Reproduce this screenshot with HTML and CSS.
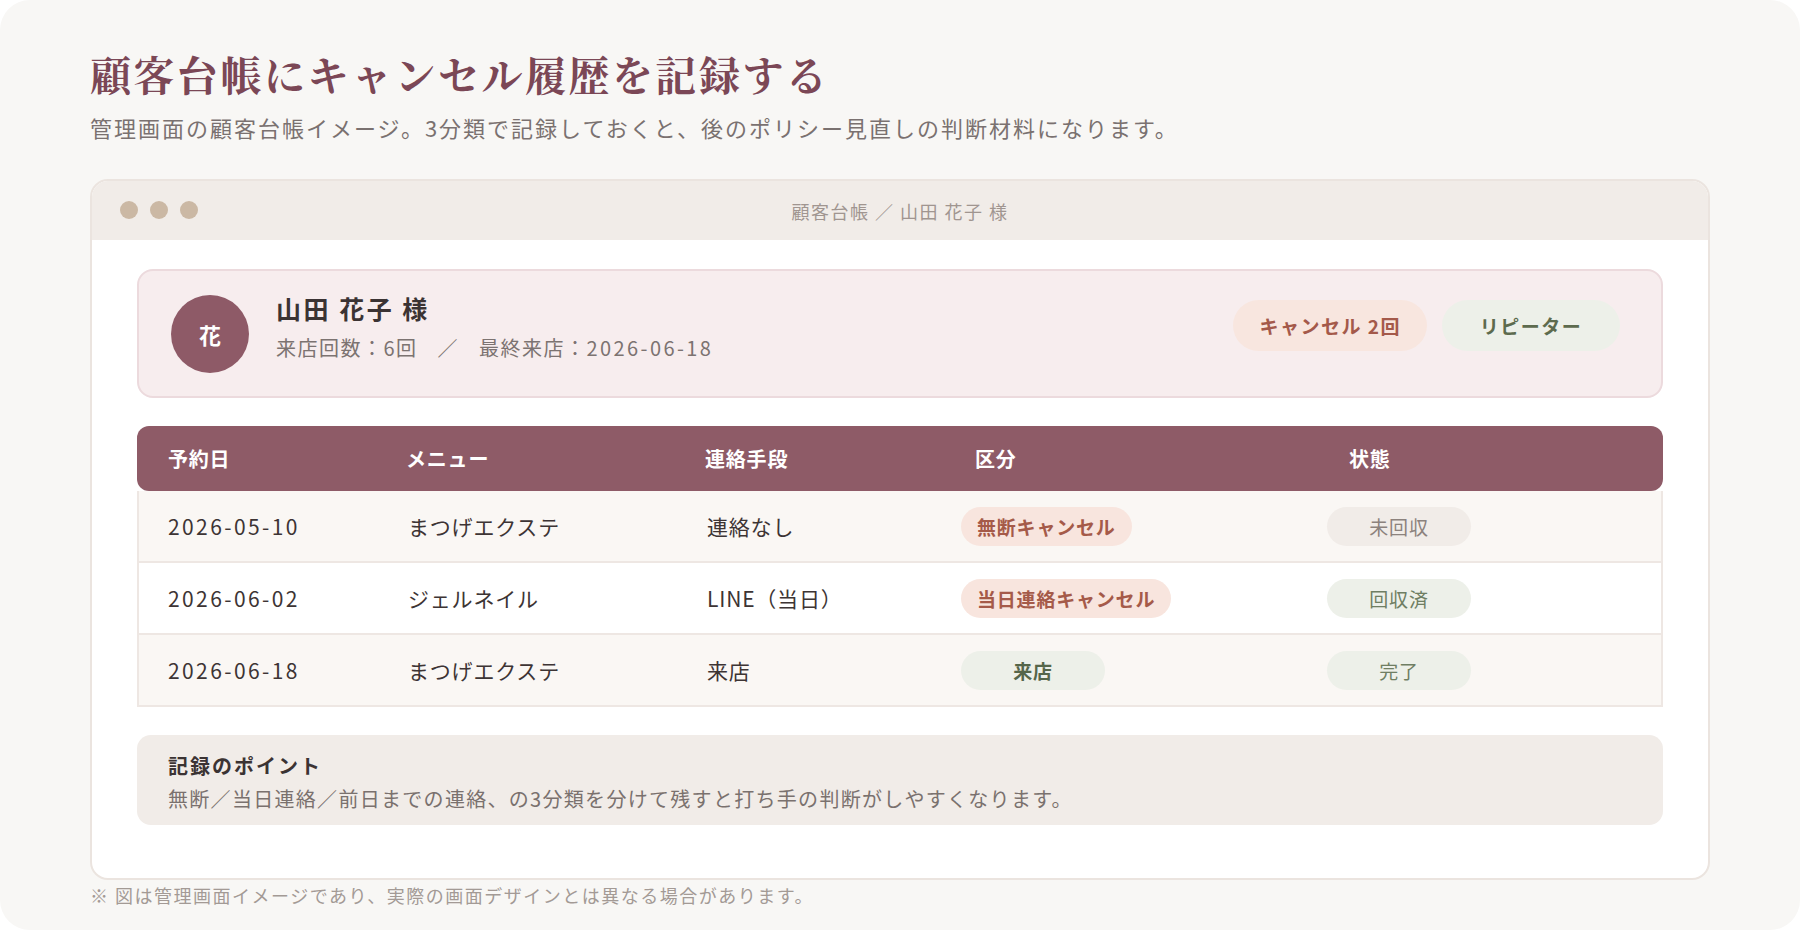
FILE: index.html
```html
<!DOCTYPE html>
<html lang="ja">
<head>
    <meta charset="UTF-8" />
    <meta name="viewport" content="width=device-width, initial-scale=1.0" />
    <title>顧客台帳にキャンセル履歴を記録する</title>
    <link rel="stylesheet" href="styles.css">
</head>
<body>
    <div class="page">
        <h1 class="title">顧客台帳にキャンセル履歴を記録する</h1>
        <p class="lead">管理画面の顧客台帳イメージ。3分類で記録しておくと、後のポリシー見直しの判断材料になります。</p>

        <div class="window">
            <div class="window-bar">
                <div class="dots">
                    <span class="dot"></span>
                    <span class="dot"></span>
                    <span class="dot"></span>
                </div>
                <div class="window-title">顧客台帳 ／ 山田 花子 様</div>
            </div>

            <div class="window-body">
                <div class="customer">
                    <div class="avatar">花</div>
                    <div class="customer-info">
                        <div class="customer-name">山田 花子 様</div>
                        <div class="customer-meta">来店回数：6回<span class="sep">／</span>最終来店：<span class="date">2026-06-18</span></div>
                    </div>
                    <div class="badges">
                        <span class="badge badge-cancel">キャンセル 2回</span>
                        <span class="badge badge-repeat">リピーター</span>
                    </div>
                </div>

                <div class="history">
                    <div class="history-head">
                        <div class="cell">予約日</div>
                        <div class="cell">メニュー</div>
                        <div class="cell">連絡手段</div>
                        <div class="cell">区分</div>
                        <div class="cell">状態</div>
                    </div>
                    <div class="history-row alt">
                        <div class="cell date">2026-05-10</div>
                        <div class="cell">まつげエクステ</div>
                        <div class="cell">連絡なし</div>
                        <div class="cell cell-tag"><span class="tag tag-cancel">無断キャンセル</span></div>
                        <div class="cell cell-state"><span class="state state-open">未回収</span></div>
                    </div>
                    <div class="history-row">
                        <div class="cell date">2026-06-02</div>
                        <div class="cell">ジェルネイル</div>
                        <div class="cell">LINE（当日）</div>
                        <div class="cell cell-tag"><span class="tag tag-cancel">当日連絡キャンセル</span></div>
                        <div class="cell cell-state"><span class="state state-done">回収済</span></div>
                    </div>
                    <div class="history-row alt">
                        <div class="cell date">2026-06-18</div>
                        <div class="cell">まつげエクステ</div>
                        <div class="cell">来店</div>
                        <div class="cell cell-tag"><span class="tag tag-visit">来店</span></div>
                        <div class="cell cell-state"><span class="state state-done">完了</span></div>
                    </div>
                </div>

                <div class="note">
                    <div class="note-title">記録のポイント</div>
                    <div class="note-text">無断／当日連絡／前日までの連絡、の3分類を分けて残すと打ち手の判断がしやすくなります。</div>
                </div>
            </div>
        </div>

        <p class="footnote">※ 図は管理画面イメージであり、実際の画面デザインとは異なる場合があります。</p>
    </div>
</body>
</html>
```

FILE: styles.css
```css
body {
    margin: 0;
    background: #fff;
    font-family: "Noto Sans CJK JP", "Noto Sans", sans-serif;
    letter-spacing: 0.05em;
    color: #3b3333;
}

.page {
    width: 1800px;
    height: 930px;
    box-sizing: border-box;
    padding: 50px 90px 0;
    background: #f8f7f5;
    border-radius: 30px;
}

.title {
    margin: 0;
    font-family: "Noto Serif CJK JP", "Noto Serif JP", serif;
    font-size: 41px;
    line-height: 48px;
    font-weight: 700;
    letter-spacing: 2.5px;
    color: #7b4756;
}

.lead {
    margin: 15px 0 0;
    font-size: 22px;
    line-height: 28px;
    letter-spacing: 2px;
    color: #7a7170;
}

.window {
    margin-top: 38px;
    background: #fff;
    border: 2px solid #ebe4df;
    border-radius: 18px;
    overflow: hidden;
}

.window-bar {
    position: relative;
    height: 59px;
    display: flex;
    align-items: center;
    justify-content: center;
    background: #f1ece8;
}

.dots {
    position: absolute;
    left: 28px;
    top: 20px;
    display: flex;
    gap: 12px;
}

.dot {
    width: 18px;
    height: 18px;
    border-radius: 50%;
    background: #cbb8a4;
}

.window-title {
    font-size: 18px;
    letter-spacing: 1.5px;
    color: #a09590;
}

.window-body {
    padding: 29px 45px 53px;
}

.customer {
    display: flex;
    align-items: center;
    gap: 27px;
    height: 129px;
    box-sizing: border-box;
    padding: 0 41px 0 32px;
    background: #f7edee;
    border: 2px solid #ecdadd;
    border-radius: 16px;
}

.avatar {
    width: 78px;
    height: 78px;
    flex-shrink: 0;
    border-radius: 50%;
    background: #8e5a67;
    color: #fff;
    font-size: 22px;
    font-weight: 700;
    display: flex;
    align-items: center;
    justify-content: center;
    letter-spacing: 0;
}

.customer-info {
    flex-grow: 1;
    padding-bottom: 14px;
}

.customer-name {
    font-size: 25px;
    line-height: 32px;
    font-weight: 700;
    letter-spacing: 2.5px;
    color: #3b3333;
}

.customer-meta {
    margin-top: 10px;
    font-size: 20px;
    line-height: 28px;
    letter-spacing: 1.5px;
    color: #7c7371;
}

.customer-meta .sep {
    margin: 0 20px;
}

.badges {
    align-self: flex-start;
    margin-top: 29px;
    display: flex;
    gap: 15px;
}

.badge {
    height: 51px;
    min-width: 178px;
    box-sizing: border-box;
    padding: 0 26px;
    border-radius: 26px;
    display: flex;
    align-items: center;
    justify-content: center;
    font-size: 19px;
    font-weight: 700;
    letter-spacing: 1.5px;
}

.badge-cancel {
    background: #f8e6df;
    color: #a4594a;
}

.badge-repeat {
    background: #edf0e9;
    color: #5d6b4e;
}

.history {
    margin-top: 28px;
}

.history-head,
.history-row {
    display: grid;
    grid-template-columns: 238px 299px 270px 374px 1fr;
    align-items: center;
}

.history-head {
    height: 65px;
    background: #8e5b67;
    border-radius: 12px;
    color: #fff;
    font-size: 20px;
    font-weight: 700;
}

.history-row {
    height: 70px;
    background: #fff;
    border: 2px solid #eee7e3;
    border-top: none;
    font-size: 21px;
    color: #3d3434;
}

.history-row.alt {
    background: #faf7f4;
}

.cell {
    padding-left: 31px;
}

.history-row .cell:first-child {
    padding-left: 29px;
}

.date {
    letter-spacing: 2.4px;
}

.history-row .cell-tag {
    padding-left: 15px;
}

.history-row .cell-state {
    padding-left: 7px;
}

.tag,
.state {
    display: inline-flex;
    align-items: center;
    justify-content: center;
    height: 39px;
    min-width: 144px;
    box-sizing: border-box;
    padding: 0 16px;
    border-radius: 20px;
    font-size: 19px;
}

.tag {
    font-weight: 700;
}

.tag-cancel {
    background: #f8e5de;
    color: #a55a49;
}

.tag-visit {
    background: #edf0e9;
    color: #56664a;
}

.state-open {
    background: #f1ece8;
    color: #8c827d;
}

.state-done {
    background: #edf0e9;
    color: #6f7e63;
}

.note {
    margin-top: 28px;
    padding: 18px 31px 13px;
    background: #f1ece8;
    border-radius: 14px;
}

.note-title {
    font-size: 20px;
    line-height: 26px;
    font-weight: 700;
    letter-spacing: 2px;
    color: #3b3333;
}

.note-text {
    margin-top: 7px;
    font-size: 20px;
    line-height: 26px;
    letter-spacing: 1.3px;
    color: #7a716e;
}

.footnote {
    margin: 3px 0 0;
    font-size: 18px;
    line-height: 24px;
    letter-spacing: 1.5px;
    color: #a39a95;
}
```
